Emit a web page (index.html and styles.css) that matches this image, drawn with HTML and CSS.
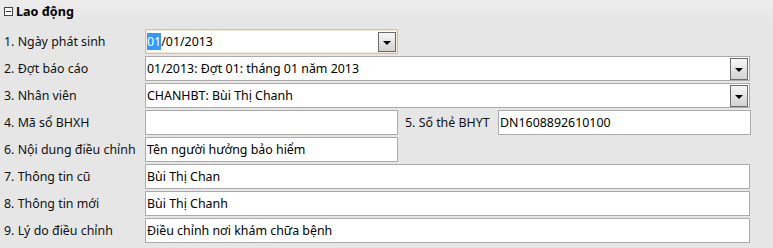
FILE: index.html
```html
<!DOCTYPE html>
<html lang="vi">
<head>
    <meta charset="UTF-8">
    <meta name="viewport" content="width=device-width, initial-scale=1.0">
    <title>Lao động</title>
    <link rel="stylesheet" href="styles.css">
</head>
<body>

    <div class="panel">
        <div class="panel-head">
            <span class="toggle"></span>
            <span class="panel-title">Lao động</span>
        </div>

        <div class="rows">
            <div class="row">
                <label class="label">1. Ngày phát sinh</label>
                <div class="field half focused">
                    <span class="value"><span class="sel">01</span>/01/2013</span>
                    <span class="drop"></span>
                </div>
            </div>
            <div class="row">
                <label class="label">2. Đợt báo cáo</label>
                <div class="field full">
                    <span class="value">01/2013: Đợt 01: tháng 01 năm 2013</span>
                    <span class="drop"></span>
                </div>
            </div>
            <div class="row">
                <label class="label">3. Nhân viên</label>
                <div class="field full">
                    <span class="value">CHANHBT: Bùi Thị Chanh</span>
                    <span class="drop"></span>
                </div>
            </div>
            <div class="row">
                <label class="label">4. Mã sổ BHXH</label>
                <div class="field half"><span class="value"></span></div>
                <label class="label-mid">5. Số thẻ BHYT</label>
                <div class="field half"><span class="value">DN1608892610100</span></div>
            </div>
            <div class="row">
                <label class="label">6. Nội dung điều chỉnh</label>
                <div class="field half"><span class="value">Tên người hưởng bảo hiểm</span></div>
            </div>
            <div class="row">
                <label class="label">7. Thông tin cũ</label>
                <div class="field full"><span class="value">Bùi Thị Chan</span></div>
            </div>
            <div class="row">
                <label class="label">8. Thông tin mới</label>
                <div class="field full"><span class="value">Bùi Thị Chanh</span></div>
            </div>
            <div class="row">
                <label class="label">9. Lý do điều chỉnh</label>
                <div class="field full"><span class="value">Điều chỉnh nơi khám chữa bệnh</span></div>
            </div>
        </div>
    </div>

</body>
</html>
```

FILE: styles.css
```css
body, html {
    margin: 0;
    padding: 0;
    font-family: "Noto Sans", Arial, sans-serif;
    font-size: 12.4px;
    color: #111;
    background-color: #e6e6e6;
}

.panel {
    width: 773px;
    height: 248px;
    overflow: hidden;
}

.panel-head {
    height: 22px;
    display: flex;
    align-items: center;
    padding-left: 4px;
    background: linear-gradient(#ececec, #e6e6e6);
}

.toggle {
    width: 7px;
    height: 7px;
    border: 1px solid #444;
    background: #fff;
    position: relative;
    margin-right: 3px;
}

.toggle::after {
    content: "";
    position: absolute;
    left: 1px;
    top: 3px;
    width: 5px;
    height: 1px;
    background: #333;
}

.panel-title {
    font-weight: bold;
    font-size: 12.6px;
    color: #000;
}

.rows {
    display: flex;
    flex-direction: column;
    gap: 2px;
    padding-top: 7px;
}

.row {
    display: flex;
    align-items: center;
    height: 25px;
}

.label {
    width: 141px;
    padding-left: 4px;
    white-space: nowrap;
}

.label-mid {
    width: 93px;
    padding-left: 7px;
    white-space: nowrap;
}

.field {
    box-sizing: border-box;
    height: 25px;
    border: 1px solid #ababab;
    background: #fff;
    display: flex;
    align-items: center;
    color: #000;
}

.field.half {
    width: 253px;
}

.field.full {
    width: 605px;
}

.field.focused {
    border-color: #dcbf98;
    box-shadow: inset 0 0 0 1px #f6e8d6;
}

.value {
    flex: 1;
    padding-left: 1px;
    white-space: nowrap;
}

.sel {
    background: #3399ff;
    color: #fff;
}

.drop {
    box-sizing: border-box;
    width: 18px;
    height: 22px;
    margin-right: 1px;
    border: 1px solid #6b6b6b;
    background: linear-gradient(#f7f7f7, #d2d2d2);
    display: flex;
    justify-content: center;
    padding-top: 9px;
}

.focused .drop {
    height: 20px;
    margin-right: 1px;
    padding-top: 8px;
}

.drop::after {
    content: "";
    width: 0;
    height: 0;
    border-left: 4px solid transparent;
    border-right: 4px solid transparent;
    border-top: 4px solid #000;
}
```
